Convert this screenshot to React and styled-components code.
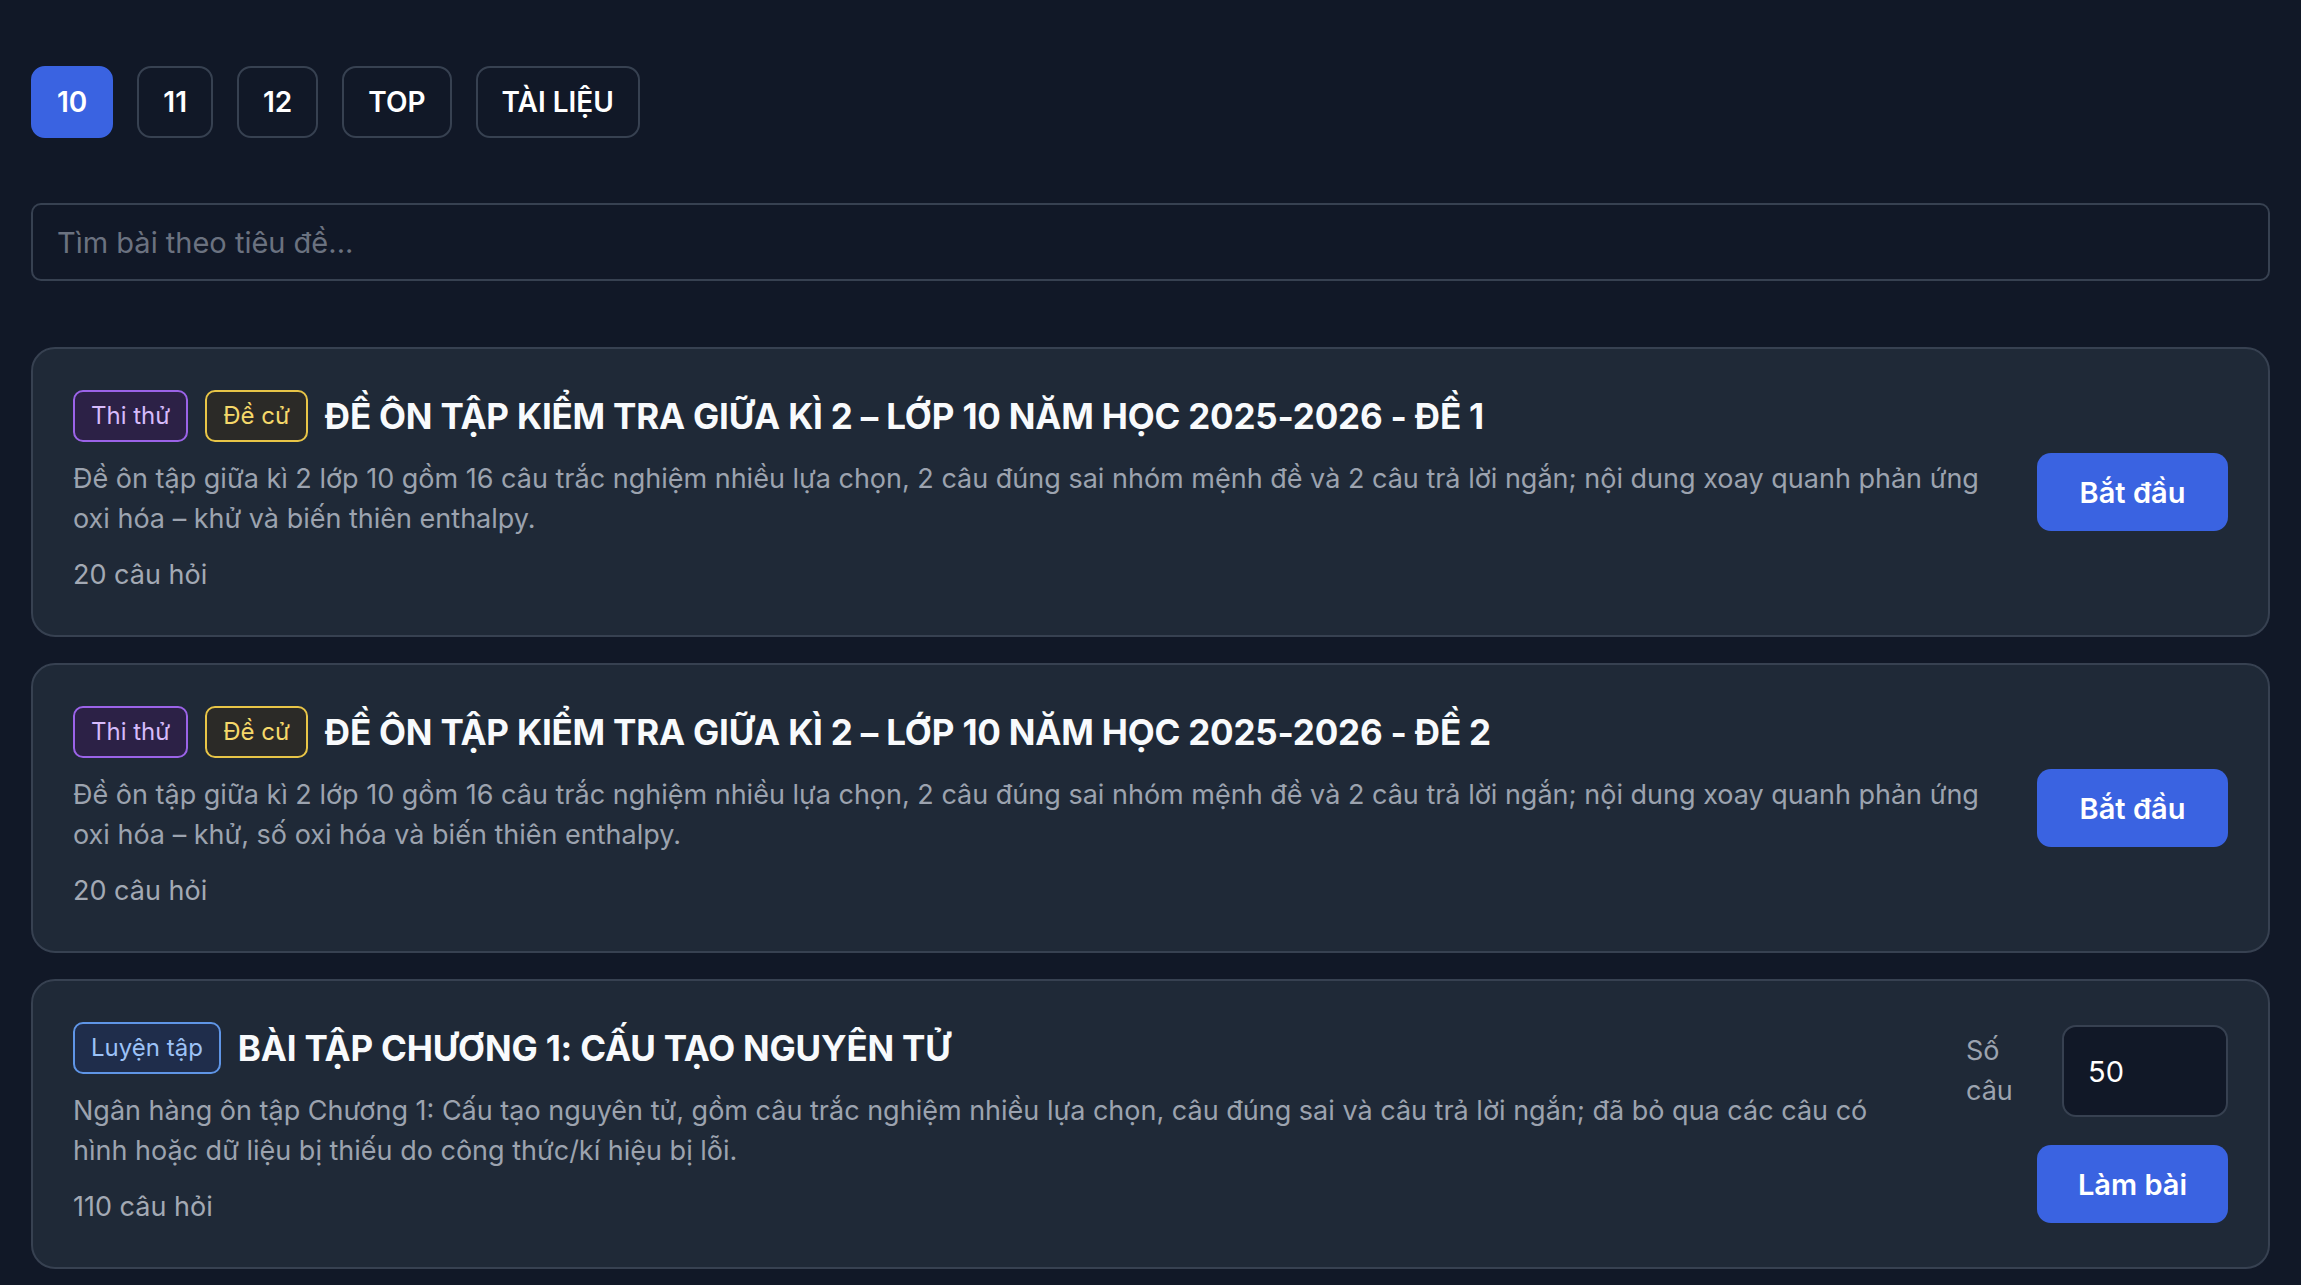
import React from 'react';
import styled, { createGlobalStyle } from 'styled-components';

const GlobalStyle = createGlobalStyle`
  body {
    margin: 0;
    background: #111827;
    font-family: Inter, "Noto Sans", "Liberation Sans", sans-serif;
    color: #f3f4f6;
  }
`;

const grades = ['10', '11', '12', 'TOP', 'TÀI LIỆU'];

const exams = [
  {
    badges: ['trial', 'pick'],
    title: 'ĐỀ ÔN TẬP KIỂM TRA GIỮA KÌ 2 – LỚP 10 NĂM HỌC 2025-2026 - ĐỀ 1',
    desc: 'Đề ôn tập giữa kì 2 lớp 10 gồm 16 câu trắc nghiệm nhiều lựa chọn, 2 câu đúng sai nhóm mệnh đề và 2 câu trả lời ngắn; nội dung xoay quanh phản ứng oxi hóa – khử và biến thiên enthalpy.',
    count: 20,
  },
  {
    badges: ['trial', 'pick'],
    title: 'ĐỀ ÔN TẬP KIỂM TRA GIỮA KÌ 2 – LỚP 10 NĂM HỌC 2025-2026 - ĐỀ 2',
    desc: 'Đề ôn tập giữa kì 2 lớp 10 gồm 16 câu trắc nghiệm nhiều lựa chọn, 2 câu đúng sai nhóm mệnh đề và 2 câu trả lời ngắn; nội dung xoay quanh phản ứng oxi hóa – khử, số oxi hóa và biến thiên enthalpy.',
    count: 20,
  },
  {
    badges: ['practice'],
    title: 'BÀI TẬP CHƯƠNG 1: CẤU TẠO NGUYÊN TỬ',
    desc: 'Ngân hàng ôn tập Chương 1: Cấu tạo nguyên tử, gồm câu trắc nghiệm nhiều lựa chọn, câu đúng sai và câu trả lời ngắn; đã bỏ qua các câu có hình hoặc dữ liệu bị thiếu do công thức/kí hiệu bị lỗi.',
    count: 110,
    practice: true,
  },
];

const badgeLabels = {
  trial: 'Thi thử',
  pick: 'Đề cử',
  practice: 'Luyện tập',
};

function App() {
  return (
    <Page>
      <GlobalStyle />
      <Tabs>
        {grades.map((g, i) => (
          <Tab key={g} $active={i === 0}>
            {g}
          </Tab>
        ))}
      </Tabs>
      <Search placeholder="Tìm bài theo tiêu đề..." />
      <List>
        {exams.map((ex) => (
          <Card key={ex.title}>
            <CardBody>
              <TitleRow>
                {ex.badges.map((b) => (
                  <Badge key={b} $kind={b}>
                    {badgeLabels[b]}
                  </Badge>
                ))}
                <Title>{ex.title}</Title>
              </TitleRow>
              <Desc>{ex.desc}</Desc>
              <Count>{ex.count} câu hỏi</Count>
            </CardBody>
            {ex.practice ? (
              <Side>
                <CountPicker>
                  <PickerLabel>Số câu</PickerLabel>
                  <NumberInput type="text" defaultValue="50" />
                </CountPicker>
                <ActionButton>Làm bài</ActionButton>
              </Side>
            ) : (
              <ActionButton>Bắt đầu</ActionButton>
            )}
          </Card>
        ))}
      </List>
    </Page>
  );
}

const Page = styled.div`
  padding: 66px 31px 40px;
  display: flex;
  flex-direction: column;
`;

const Tabs = styled.div`
  display: flex;
  gap: 24px;
`;

const Tab = styled.button`
  height: 72px;
  padding: 0 24px;
  border-radius: 14px;
  border: 2px solid ${(p) => (p.$active ? '#3a63e1' : '#374151')};
  background: ${(p) => (p.$active ? '#3a63e1' : 'transparent')};
  color: #ffffff;
  font-family: inherit;
  font-size: 28px;
  font-weight: 600;
  cursor: pointer;
`;

const Search = styled.input`
  margin-top: 65px;
  height: 78px;
  box-sizing: border-box;
  width: 100%;
  border: 2px solid #374151;
  border-radius: 10px;
  background: #111827;
  padding: 0 24px;
  font-family: inherit;
  font-size: 29px;
  color: #f3f4f6;
  outline: none;
  &::placeholder {
    color: #6b7280;
  }
`;

const List = styled.div`
  margin-top: 66px;
  display: flex;
  flex-direction: column;
  gap: 26px;
`;

const Card = styled.div`
  display: flex;
  align-items: center;
  gap: 40px;
  min-height: 290px;
  box-sizing: border-box;
  padding: 38px 40px;
  background: #1f2937;
  border: 2px solid #374151;
  border-radius: 24px;
`;

const CardBody = styled.div`
  flex: 1;
  min-width: 0;
`;

const TitleRow = styled.div`
  display: flex;
  align-items: center;
  gap: 17px;
`;

const badgeColors = {
  trial: { border: '#9b63e8', bg: '#2c2146', text: '#d6bbfb' },
  pick: { border: '#e8c547', bg: '#2b2a27', text: '#f5d86a' },
  practice: { border: '#5f95e6', bg: '#1f2d4b', text: '#9cc2f7' },
};

const Badge = styled.span`
  display: inline-flex;
  align-items: center;
  height: 52px;
  box-sizing: border-box;
  padding: 0 16px;
  border-radius: 10px;
  border: 2px solid ${(p) => badgeColors[p.$kind].border};
  background: ${(p) => badgeColors[p.$kind].bg};
  color: ${(p) => badgeColors[p.$kind].text};
  font-size: 24px;
  white-space: nowrap;
`;

const Title = styled.h2`
  margin: 0;
  font-size: 35px;
  font-weight: 700;
  color: #f8fafc;
  letter-spacing: -0.2px;
`;

const Desc = styled.p`
  margin: 17px 0 0;
  font-size: 27px;
  line-height: 40px;
  color: #9ca3af;
`;

const Count = styled.div`
  margin-top: 16px;
  font-size: 27px;
  line-height: 40px;
  color: #a3a9b4;
`;

const ActionButton = styled.button`
  flex-shrink: 0;
  width: 191px;
  height: 78px;
  border: none;
  border-radius: 14px;
  background: #3a63e1;
  color: #ffffff;
  font-family: inherit;
  font-size: 29px;
  font-weight: 600;
  cursor: pointer;
`;

const Side = styled.div`
  flex-shrink: 0;
  display: flex;
  flex-direction: column;
  align-items: flex-end;
  gap: 28px;
`;

const CountPicker = styled.div`
  display: flex;
  align-items: center;
  gap: 24px;
`;

const PickerLabel = styled.label`
  width: 72px;
  font-size: 27px;
  line-height: 40px;
  color: #9ca3af;
`;

const NumberInput = styled.input`
  width: 166px;
  height: 92px;
  box-sizing: border-box;
  padding: 0 24px;
  border: 2px solid #374151;
  border-radius: 14px;
  background: #111827;
  color: #ffffff;
  font-family: inherit;
  font-size: 29px;
  outline: none;
`;

export default App;
